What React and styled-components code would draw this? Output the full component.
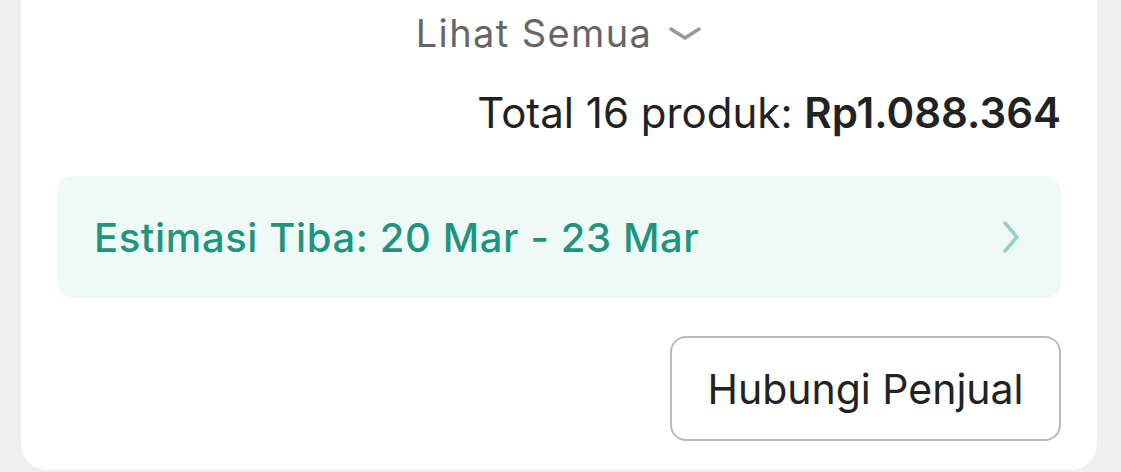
import React from "react";
import styled, { createGlobalStyle } from "styled-components";

const GlobalStyle = createGlobalStyle`
  html, body {
    margin: 0;
    padding: 0;
    background: #efefef;
    font-family: Inter, "Noto Sans", sans-serif;
  }
`;

const Page = styled.div`
  width: 1121px;
  height: 472px;
  padding: 0 24px 2px 21px;
  box-sizing: border-box;
  display: flex;
  flex-direction: column;
  justify-content: flex-end;
`;

const Card = styled.div`
  background: #fff;
  border-radius: 0 0 26px 26px;
  padding: 0 36px 29px 36px;
  display: flex;
  flex-direction: column;
`;

const SeeAll = styled.button`
  align-self: center;
  display: flex;
  align-items: center;
  gap: 16px;
  height: 66px;
  background: none;
  border: none;
  padding: 0;
  font-family: inherit;
  font-size: 38px;
  letter-spacing: 1.4px;
  color: #666;
  svg {
    margin-top: 2px;
  }
`;

const Total = styled.div`
  align-self: flex-end;
  margin-top: 21px;
  font-size: 42px;
  line-height: 52px;
  color: #222;
  b {
    font-weight: 600;
  }
`;

const Estimate = styled.div`
  margin-top: 37px;
  height: 122px;
  border-radius: 16px;
  background: #effaf6;
  display: flex;
  align-items: center;
  justify-content: space-between;
  padding: 0 42px 0 37px;
  color: #1f9580;
  font-size: 40px;
  font-weight: 500;
  letter-spacing: 0.6px;
`;

const Actions = styled.div`
  display: flex;
  justify-content: flex-end;
  margin-top: 38px;
`;

const OutlineButton = styled.button`
  width: 391px;
  height: 105px;
  box-sizing: border-box;
  border: 2px solid #bababa;
  border-radius: 16px;
  background: #fff;
  font-family: inherit;
  font-size: 41px;
  color: #222;
`;

const App = () => {
  return (
    <>
      <GlobalStyle />
      <Page>
        <Card>
          <SeeAll>
            Lihat Semua
            <svg width="34" height="14" viewBox="0 0 34 14">
              <path d="M3 2 L17 11 L31 2" fill="none" stroke="#999" strokeWidth="3.5" strokeLinecap="round" strokeLinejoin="round" />
            </svg>
          </SeeAll>
          <Total>
            Total 16 produk: <b>Rp1.088.364</b>
          </Total>
          <Estimate>
            <span>Estimasi Tiba: 20 Mar - 23 Mar</span>
            <svg width="16" height="32" viewBox="0 0 16 32">
              <path d="M2 2 L14 16 L2 30" fill="none" stroke="#92d3c3" strokeWidth="3.5" strokeLinecap="round" strokeLinejoin="round" />
            </svg>
          </Estimate>
          <Actions>
            <OutlineButton>Hubungi Penjual</OutlineButton>
          </Actions>
        </Card>
      </Page>
    </>
  );
};

export default App;
